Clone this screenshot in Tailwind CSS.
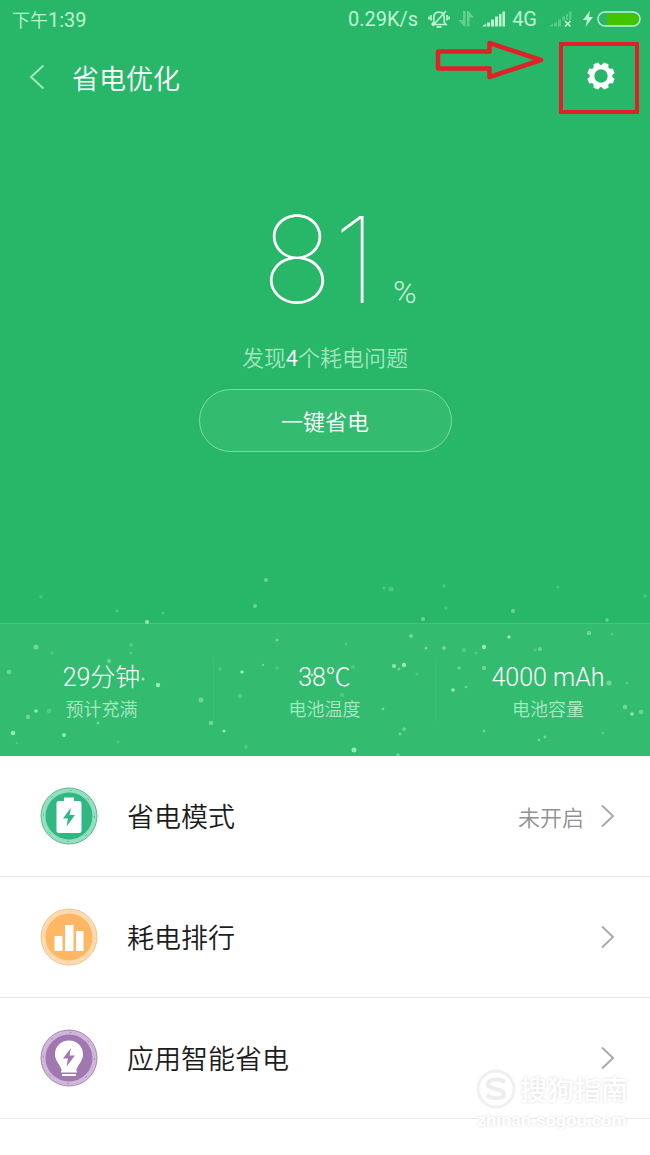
<!DOCTYPE html>
<html lang="zh-CN">
<head>
    <meta charset="UTF-8">
    <meta name="viewport" content="width=device-width, initial-scale=1.0">
    <title>省电优化</title>
    <script src="https://cdn.jsdelivr.net/npm/@tailwindcss/browser@4"></script>
</head>
<body class="min-h-screen bg-white font-['Noto_Sans_CJK_SC',sans-serif]">
    <div class="relative">
        <section class="relative bg-[#28b768] text-white">
            <!-- Status bar -->
            <div class="flex h-[38px] items-center justify-between pl-3 pr-[9px] text-[#bdf5d3]">
                <span class="text-lg font-[350]">下午<span class="font-['Roboto',sans-serif] text-xl font-normal">1:39</span></span>
                <div class="flex items-center font-['Roboto',sans-serif] text-xl">
                    <span class="mr-[10px]">0.29K/s</span>
                    <svg class="mr-2 h-5 w-[22px]" viewBox="0 0 22 20" fill="none" stroke="currentColor" stroke-width="1.7" aria-hidden="true">
                        <path d="M3.500 15.500h14.500l-1.800-2.500V8.500C16.200 5 14 3.200 11 3.200S5.800 5 5.800 8.500V13l-2 2.500M8.500 17.800h5M4.500 17L18 2"/>
                        <path d="M3 6v5.500M19 6v5.500M1 7.500v3M21 7.500v3"/>
                    </svg>
                    <svg class="mr-2 h-5 w-4 opacity-40" viewBox="0 0 16 20" fill="currentColor" aria-hidden="true">
                        <path d="M5 2h2.500v15.500H6L.5 11H5zM9 17.500V2h1.500L16 8.500h-4.500v9z"/>
                    </svg>
                    <svg class="mr-[6px] h-5 w-6" viewBox="0 0 24 20" fill="currentColor" aria-hidden="true">
                        <path d="M0 17.500l4-3v3zM5 13.500h3v4H5zM9 10.500h3v7H9zM13 7.500h3v10h-3zM17 5h2.500v12.500H17zM20.500 2.500H23v15h-2.500z"/>
                    </svg>
                    <span class="mr-3">4G</span>
                    <svg class="mr-[10px] h-5 w-6" viewBox="0 0 24 20" fill="currentColor" aria-hidden="true">
                        <path opacity=".3" d="M0 17.500l4-3v3zM5 13.500h3v4H5zM9 10.500h3v7H9zM13 7.500h3v4h-3zM17 5h2v6h-2zM20 2.500h2.500V11H20z"/>
                        <path d="M16 12l5.500 5.500M21.500 12L16 17.500" stroke="currentColor" stroke-width="1.600"/>
                    </svg>
                    <svg class="mr-1 h-5 w-[10px]" viewBox="0 0 10 20" fill="currentColor" aria-hidden="true">
                        <path d="M7 1.500L0 11h4L2.500 18 10 8H6z"/>
                    </svg>
                    <svg class="h-4 w-11" viewBox="0 0 44 16" aria-hidden="true">
                        <path d="M10 2h26a6 6 0 0 1 0 12H10z" fill="#43c400"/>
                        <rect x="1" y="1" width="42" height="14" rx="7" fill="none" stroke="currentColor" stroke-width="1.500"/>
                    </svg>
                </div>
            </div>

            <!-- Header -->
            <header class="flex h-20 items-center pl-7 pr-[11px]">
                <a href="#" aria-label="返回" class="text-[#a4e8c0]">
                    <svg class="h-7 w-[18px]" viewBox="0 0 18 28" fill="none" stroke="currentColor" stroke-width="2"><path d="M15.500 1.500L3 13l12.500 11.500"/></svg>
                </a>
                <h1 class="ml-[26px] text-[27px] font-[350] text-white">省电优化</h1>
                <button type="button" aria-label="设置" class="ml-auto flex h-[72px] w-20 items-center justify-center border-4 border-[#e02128] pb-1">
                    <svg class="ml-1 h-7 w-7" viewBox="-14 -14 28 28" fill="none" stroke="#fff" aria-hidden="true">
                        <circle r="9" stroke-width="4.600"/>
                        <g fill="#fff" stroke="#fff" stroke-width="1" stroke-linejoin="round">
                            <path id="tooth" transform="rotate(22.500)" d="M-3-10L-2.200-13.200H2.200L3-10z"/>
                            <use href="#tooth" transform="rotate(45)"/>
                            <use href="#tooth" transform="rotate(90)"/>
                            <use href="#tooth" transform="rotate(135)"/>
                            <use href="#tooth" transform="rotate(180)"/>
                            <use href="#tooth" transform="rotate(225)"/>
                            <use href="#tooth" transform="rotate(270)"/>
                            <use href="#tooth" transform="rotate(315)"/>
                        </g>
                    </svg>
                </button>
            </header>
            <svg class="absolute right-[106px] top-10 h-10 w-[110px]" viewBox="0 0 110 40" fill="none" stroke="#e02128" stroke-width="4.500" stroke-linejoin="round" aria-hidden="true">
                <path d="M4 11.500H55.500V3L107 20 55.500 37V28.500H4z"/>
            </svg>

            <!-- Battery level -->
            <div class="flex h-[505px] flex-col items-center pt-20">
                <div class="flex items-baseline pl-[28px]">
                    <span class="font-['Inter',sans-serif] text-[120px] font-thin leading-[124px]">81</span>
                    <span class="ml-4 font-['Roboto',sans-serif] text-[32px] font-light leading-8 text-[#c9f3d9]">%</span>
                </div>
                <p class="mt-[18px] text-[22px] font-[350] leading-8 text-[#a3e5be]">发现<span class="text-white">4</span>个耗电问题</p>
                <button type="button" class="mt-[17px] h-[63px] w-[253px] rounded-full border border-[#80d9a5] bg-white/5 text-[22px] font-[350]">一键省电</button>
            </div>

            <!-- Stats -->
            <dl class="grid h-[133px] grid-cols-[213fr_223fr_214fr] items-center border-t border-white/10 bg-white/5 text-center">
                <div class="flex flex-col-reverse pr-[10px]">
                    <dt class="text-lg font-[350] leading-7 text-[#a9e8c3]">预计充满</dt>
                    <dd class="pt-1 font-['Roboto','Noto_Sans_CJK_SC',sans-serif] text-[25px] font-light leading-8">29分钟</dd>
                </div>
                <div class="flex flex-col-reverse border-x border-white/5">
                    <dt class="text-lg font-[350] leading-7 text-[#a9e8c3]">电池温度</dt>
                    <dd class="pt-1 font-['Roboto','Noto_Sans_CJK_SC',sans-serif] text-[25px] font-light leading-8">38℃</dd>
                </div>
                <div class="flex flex-col-reverse pl-[10px]">
                    <dt class="text-lg font-[350] leading-7 text-[#a9e8c3]">电池容量</dt>
                    <dd class="pt-1 font-['Roboto','Noto_Sans_CJK_SC',sans-serif] text-[25px] font-light leading-8">4000 mAh</dd>
                </div>
            </dl>

            <!-- Floating particles -->
            <svg class="pointer-events-none absolute bottom-0 left-0 w-full" viewBox="0 560 650 196" fill="#a8f2c7" aria-hidden="true">
                <g opacity=".85">
                    <circle cx="147" cy="622" r="2"/><circle cx="143" cy="679" r="1.500"/><circle cx="158" cy="685" r="2.200"/>
                    <circle cx="36" cy="711" r="1.800"/><circle cx="13" cy="733" r="2.200"/><circle cx="64" cy="735" r="2"/>
                    <circle cx="242" cy="672" r="1.800"/><circle cx="453" cy="690" r="1.800"/><circle cx="394" cy="666" r="2"/>
                    <circle cx="404" cy="665" r="2.200"/><circle cx="632" cy="714" r="1.700"/><circle cx="484" cy="647" r="2.200"/>
                    <circle cx="354" cy="750" r="2.500"/><circle cx="576" cy="708" r="2"/><circle cx="509" cy="637" r="1.700"/>
                    <circle cx="224" cy="731" r="1.500"/><circle cx="312" cy="675" r="1.500"/>
                </g>
                <g opacity=".5">
                    <circle cx="266" cy="580" r="2"/><circle cx="255" cy="606" r="2"/><circle cx="36" cy="647" r="2.500"/>
                    <circle cx="9" cy="672" r="2.300"/><circle cx="109" cy="661" r="2"/><circle cx="201" cy="700" r="2.500"/>
                    <circle cx="211" cy="723" r="2.300"/><circle cx="28" cy="717" r="2.200"/><circle cx="98" cy="723" r="1.500"/>
                    <circle cx="277" cy="640" r="1.600"/><circle cx="263" cy="665" r="1.200"/><circle cx="423" cy="619" r="2"/>
                    <circle cx="411" cy="636" r="2"/><circle cx="426" cy="648" r="1.600"/><circle cx="444" cy="648" r="2"/>
                    <circle cx="513" cy="611" r="2"/><circle cx="607" cy="620" r="1.700"/><circle cx="589" cy="633" r="2.200"/>
                    <circle cx="399" cy="669" r="1.500"/><circle cx="459" cy="668" r="1.700"/><circle cx="484" cy="668" r="2.200"/>
                    <circle cx="466" cy="687" r="1.300"/><circle cx="609" cy="683" r="2.600"/><circle cx="625" cy="707" r="2.300"/>
                    <circle cx="641" cy="712" r="2.300"/><circle cx="383" cy="709" r="1.400"/><circle cx="404" cy="729" r="1.800"/>
                    <circle cx="400" cy="734" r="1.600"/><circle cx="398" cy="755" r="1.800"/><circle cx="484" cy="731" r="1.400"/>
                    <circle cx="539" cy="740" r="1.500"/><circle cx="545" cy="737" r="1.500"/><circle cx="541" cy="668" r="1.700"/>
                    <circle cx="540" cy="649" r="2"/><circle cx="116" cy="703" r="2"/>
                </g>
                <g opacity=".25">
                    <circle cx="41" cy="597" r="1.700"/><circle cx="117" cy="611" r="1.600"/><circle cx="163" cy="613" r="1.600"/>
                    <circle cx="131" cy="645" r="2.200"/><circle cx="131" cy="653" r="1.600"/><circle cx="52" cy="653" r="1.700"/>
                    <circle cx="49" cy="711" r="2.400"/><circle cx="118" cy="742" r="1.600"/><circle cx="17" cy="743" r="1.300"/>
                    <circle cx="240" cy="696" r="2.400"/><circle cx="220" cy="669" r="1.800"/><circle cx="246" cy="747" r="2"/>
                    <circle cx="277" cy="668" r="1.700"/><circle cx="391" cy="589" r="2.600"/><circle cx="384" cy="588" r="1.700"/>
                    <circle cx="444" cy="586" r="1.800"/><circle cx="446" cy="608" r="1.800"/><circle cx="558" cy="587" r="1.600"/>
                    <circle cx="645" cy="596" r="1.800"/><circle cx="464" cy="650" r="2.300"/><circle cx="476" cy="653" r="1.500"/>
                    <circle cx="535" cy="650" r="1.700"/><circle cx="346" cy="644" r="1.500"/><circle cx="353" cy="667" r="2"/>
                    <circle cx="342" cy="695" r="2"/><circle cx="417" cy="674" r="1.600"/><circle cx="627" cy="683" r="1.500"/>
                    <circle cx="603" cy="733" r="1.600"/><circle cx="612" cy="634" r="1.500"/>
                </g>
            </svg>
        </section>

        <!-- Menu -->
        <nav class="text-[27px] font-[350] text-[#1c1c1c]">
            <a href="#" class="flex h-[121px] items-center border-b border-[#e8e8e8] pl-10 pr-[34px]">
                <svg class="h-[58px] w-[58px]" viewBox="0 0 58 58" aria-hidden="true">
                    <circle cx="29" cy="29" r="28" fill="#94dfbf" stroke="#5fb893"/>
                    <circle cx="29" cy="29" r="25.500" fill="none" stroke="#58bd94" stroke-dasharray="2 18"/>
                    <circle cx="29" cy="29" r="23.500" fill="#31b782"/>
                    <path d="M24 10.500h10V14h5a2.500 2.500 0 0 1 2.500 2.500v27A2.500 2.500 0 0 1 39 46H19a2.500 2.500 0 0 1-2.500-2.500v-27A2.500 2.500 0 0 1 19 14h5z" fill="#fff"/>
                    <path d="M31 20.500L23 31.500h5L26.500 39.500 35 28h-5.500z" fill="#31b782"/>
                </svg>
                <span class="ml-[29px]">省电模式</span>
                <span class="ml-auto text-[22px] text-[#929292]">未开启</span>
                <svg class="ml-4 h-6 w-4" viewBox="0 0 16 24" fill="none" stroke="#aaa" stroke-width="2" aria-hidden="true"><path d="M2 1.500l11 10.500L2 22.500"/></svg>
            </a>
            <a href="#" class="flex h-[121px] items-center border-b border-[#e8e8e8] pl-10 pr-[34px]">
                <svg class="h-[58px] w-[58px]" viewBox="0 0 58 58" aria-hidden="true">
                    <circle cx="29" cy="29" r="28" fill="#fddbae" stroke="#f0c490"/>
                    <circle cx="29" cy="29" r="25.500" fill="none" stroke="#f9c88b" stroke-dasharray="2 18"/>
                    <circle cx="29" cy="29" r="23.500" fill="#ffb764"/>
                    <path d="M14.500 28h8v15h-8zM25 17h8.500v26H25zM36 23h7.500v20H36z" fill="#fff"/>
                </svg>
                <span class="ml-[29px]">耗电排行</span>
                <svg class="ml-auto h-6 w-4" viewBox="0 0 16 24" fill="none" stroke="#aaa" stroke-width="2" aria-hidden="true"><path d="M2 1.500l11 10.500L2 22.500"/></svg>
            </a>
            <a href="#" class="flex h-[121px] items-center border-b border-[#e8e8e8] pl-10 pr-[34px]">
                <svg class="h-[58px] w-[58px]" viewBox="0 0 58 58" aria-hidden="true">
                    <circle cx="29" cy="29" r="28" fill="#cfb6da" stroke="#a58bb0"/>
                    <circle cx="29" cy="29" r="25.500" fill="none" stroke="#a985ba" stroke-dasharray="2 18"/>
                    <circle cx="29" cy="29" r="23.500" fill="#a078b0"/>
                    <path d="M29 11.500c-8 0-14 6-14 13.500 0 8 5.500 10 7 17.500h14c1.500-7.500 7-9.500 7-17.500 0-7.500-6-13.500-14-13.500z" fill="#fff"/>
                    <path d="M21 42h16v1.500H21zM22 45h14v2H22z" fill="#fff"/>
                    <path d="M31 19L23 29.500h5L26.500 37.500 35 26.500h-5.500z" fill="#a078b0"/>
                </svg>
                <span class="ml-[29px]">应用智能省电</span>
                <svg class="ml-auto h-6 w-4" viewBox="0 0 16 24" fill="none" stroke="#aaa" stroke-width="2" aria-hidden="true"><path d="M2 1.500l11 10.500L2 22.500"/></svg>
            </a>
        </nav>

        <!-- Watermark -->
        <div class="pointer-events-none absolute -bottom-[14px] right-[22px] text-white [text-shadow:0_0_3px_#d8d8d8]">
            <div class="flex items-center gap-1">
                <svg class="h-10 w-10" viewBox="0 0 40 40" fill="none" aria-hidden="true">
                    <circle cx="20" cy="20" r="18" stroke="#f0f0f0" stroke-width="3"/>
                    <path d="M29 13c-4-3-17-4-17 2 0 6 16 4 16 10 0 6-13 5-17 1" stroke="#ededed" stroke-width="4"/>
                </svg>
                <span class="text-[27px] font-medium leading-10">搜狗指南</span>
            </div>
            <div class="text-center font-['Liberation_Sans',sans-serif] text-[17px] font-bold leading-6">zhinan.sogou.com</div>
        </div>
    </div>
</body>
</html>
